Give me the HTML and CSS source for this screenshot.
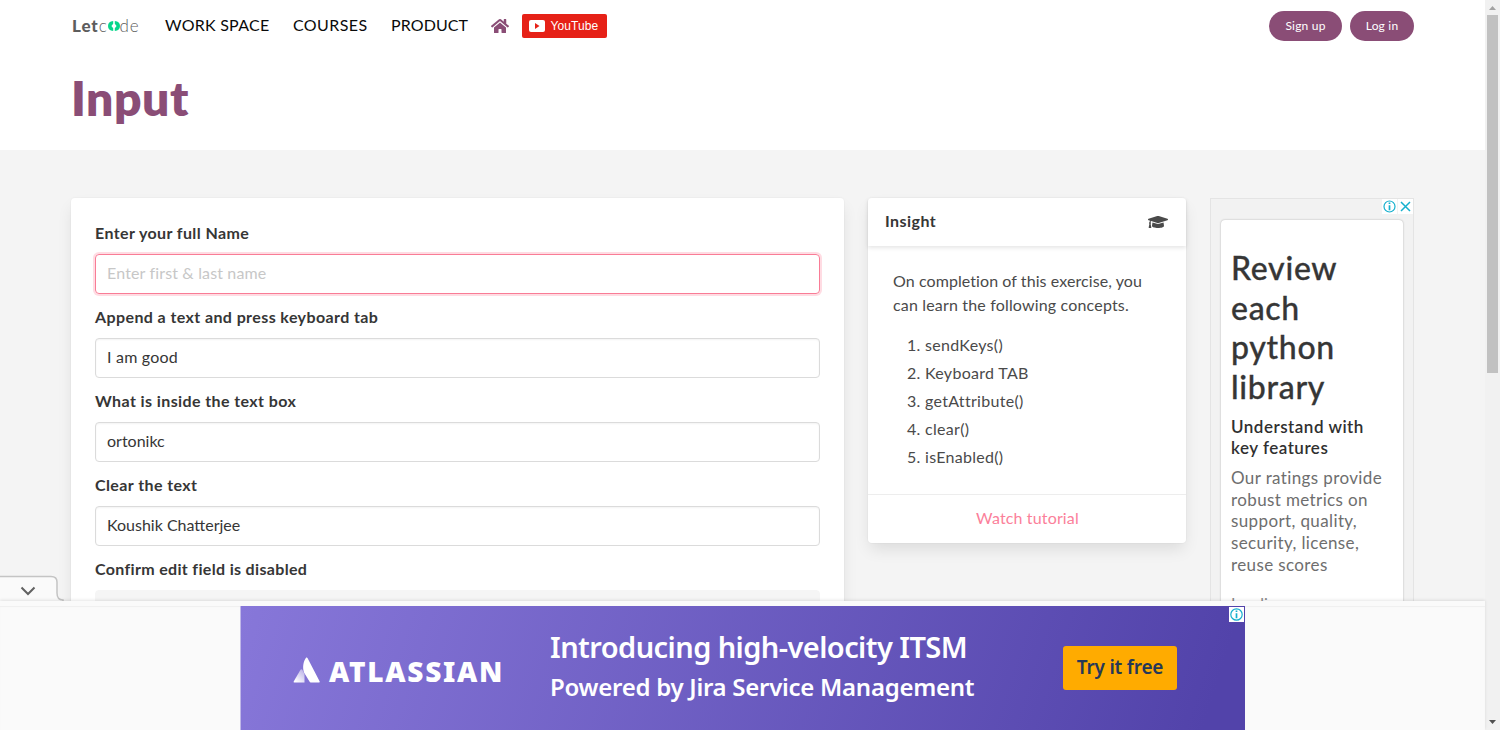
FILE: index.html
```html
<!DOCTYPE html>
<html lang="en">
<head>
<meta charset="utf-8">
<title>Input | LetCode</title>
<link rel="stylesheet" href="styles.css">
</head>
<body>
<div class="window">
  <div class="viewport">
    <div class="page">
      <header class="navbar">
        <a class="logo"><b>Let</b><span>c</span><svg width="12" height="10" viewBox="0 0 12 10"><path d="M5.200 0Q0 .500 0 5T5.200 10V7.200L3.400 5l1.800-2.200zM6.800 0Q12 .500 12 5T6.800 10V7.200L8.600 5 6.800 2.800z" fill="#08d68b"/></svg><span>de</span></a>
        <nav class="links">
          <a class="work">WORK SPACE</a>
          <a class="courses">COURSES</a>
          <a class="product">PRODUCT</a>
        </nav>
        <svg class="home" width="18" height="16" viewBox="0 0 576 512"><path fill="#8a4d76" d="M280.370 148.260 96 300.110V464a16 16 0 0 0 16 16l112-.300a16 16 0 0 0 16-16V368a16 16 0 0 1 16-16h64a16 16 0 0 1 16 16v95.600a16 16 0 0 0 16 16.100L464 480a16 16 0 0 0 16-16V300L295.670 148.260a12.190 12.190 0 0 0-15.300 0zM571.600 251.470 488 182.560V44a12 12 0 0 0-12-12h-56a12 12 0 0 0-12 12v72.600l-89.500-73.700a48 48 0 0 0-61 0L4.300 251.470a12 12 0 0 0-1.600 16.900l25.500 31a12 12 0 0 0 16.900 1.600l235.200-193.700a12.200 12.200 0 0 1 15.300 0L530.900 301a12 12 0 0 0 16.900-1.600l25.500-31a12 12 0 0 0-1.700-16.930z"/></svg>
        <a class="youtube"><svg width="16" height="12" viewBox="0 0 16 12"><rect width="16" height="12" rx="2" fill="#fff"/><path d="M6 3v6l4.500-3z" fill="#e62117"/></svg>YouTube</a>
        <div class="account"><a class="pill signup">Sign up</a><a class="pill login">Log in</a></div>
      </header>
      <h1 class="title">Input</h1>
      <main class="columns">
        <section class="card form">
          <label>Enter your full Name</label><div class="input focused"><span>Enter first &amp; last name</span></div>
          <label>Append a text and press keyboard tab</label><div class="input airy"><span>I am good</span></div>
          <label>What is inside the text box</label><div class="input"><span>ortonikc</span></div>
          <label>Clear the text</label><div class="input"><span>Koushik Chatterjee</span></div>
          <label class="last">Confirm edit field is disabled</label><div class="input disabled"></div>
        </section>
        <section class="card insight">
          <div class="card-header"><span>Insight</span>
            <svg width="20" height="16" viewBox="0 0 640 512"><path fill="#4a4a4a" d="M622.340 153.200 343.400 67.500c-15.200-4.670-31.600-4.670-46.790 0L17.660 153.200c-23.540 7.230-23.540 38.360 0 45.590l48.630 14.940c-10.670 13.190-17.230 29.280-17.880 46.900C38.780 266.150 32 276.110 32 288c0 10.780 5.680 19.850 13.860 25.650L20.330 428.530C18.110 438.520 25.710 448 35.940 448h56.110c10.240 0 17.840-9.480 15.620-19.470L82.140 313.650C90.320 307.850 96 298.780 96 288c0-11.570-6.470-21.250-15.660-26.870.76-15.020 8.440-28.300 20.690-36.720L296.600 284.500c9.060 2.780 26.440 6.250 46.790 0l278.950-85.700c23.550-7.240 23.550-38.360 0-45.600zM352.790 315.090c-28.530 8.760-52.840 3.920-65.590 0l-145.020-44.550L128 384c0 35.350 85.960 64 192 64s192-28.650 192-64l-14.180-113.470z"/></svg>
          </div>
          <div class="card-body">
            <p><span class="intro">On completion of this exercise, you</span><br><span>can learn the following concepts.</span></p>
            <ol><li>sendKeys()</li><li>Keyboard TAB</li><li>getAttribute()</li><li>clear()</li><li>isEnabled()</li></ol>
          </div>
          <a class="card-footer">Watch tutorial</a>
        </section>
        <aside class="side-ad">
          <div class="ad-choices">
            <svg width="15" height="15" viewBox="0 0 15 15" fill="none" stroke="#16b0ce"><circle cx="7.500" cy="7.500" r="5.500" stroke-width="1.200"/><path d="M7.500 3.500v1.500M7.500 6.200v5" stroke-width="1.700"/></svg>
            <svg width="15" height="15" viewBox="0 0 15 15"><path d="m3 3 9 9m0-9-9 9" stroke="#16b0ce" stroke-width="1.500"/></svg>
          </div>
          <div class="ad-card">
            <h2>Review<br>each<br>python<br>library</h2>
            <h3>Understand with<br>key features</h3>
            <p>Our ratings provide<br>robust metrics on<br>support, quality,<br>security, license,<br>reuse scores</p>
            <div class="more">Leading</div>
          </div>
        </aside>
      </main>
      <svg class="dock-tab" width="70" height="28" viewBox="0 0 70 28"><path d="M-1 3.500H51Q57 3.500 57 9V20Q57 27 63 27V29H-1Z" fill="#fafafa" stroke="#c4c4c4" stroke-width="1.500"/><path d="m21.500 14.500 6.500 6.500 6.500-6.500" fill="none" stroke="#616161" stroke-width="2"/></svg>
    </div>
    <footer class="dock">
      <div class="banner">
        <svg class="mark" width="28" height="26" viewBox="0 0 28 26"><defs><linearGradient id="fade" x1="1" y1="0" x2="0.300" y2="1"><stop offset="0" stop-color="#fff" stop-opacity=".4"/><stop offset="1" stop-color="#fff"/></linearGradient></defs><path d="M7.500 12.800Q8.500 11.500 9.500 13L11.500 17V25.500H1.200Q.300 25.500.700 24.500z" fill="url(#fade)"/><path d="M13.200.600Q14 .100 14.500 1l12.200 23.500Q27.100 25.500 26 25.500H17.800Q16.900 25.500 16.500 24.600L11 15.500C9.200 10 10.500 4 13.200.600z" fill="#fff"/></svg>
        <span class="brand">ATLASSIAN</span>
        <div class="pitch"><div class="pitch1">Introducing high-velocity ITSM</div><div class="pitch2">Powered by Jira Service Management</div></div>
        <a class="cta">Try it free</a>
        <svg class="banner-info" width="15" height="15" viewBox="0 0 15 15" fill="none" stroke="#16b0ce"><rect width="15" height="15" fill="#fff" stroke="none"/><circle cx="7.500" cy="7.500" r="5.700" stroke-width="1.200"/><path d="M7.500 3.500v1.500M7.500 6.200v5" stroke-width="1.700"/></svg>
      </div>
    </footer>
  </div>
  <div class="scrollbar">
    <svg width="15" height="15" viewBox="0 0 15 15"><path d="M4 10h7L7.500 6z" fill="#a3a3a3"/></svg>
    <div class="thumb"></div>
    <svg width="15" height="15" viewBox="0 0 15 15"><path d="M4 5h7L7.500 9z" fill="#505050"/></svg>
  </div>
</div>
</body>
</html>
```
FILE: styles.css
```css
* { box-sizing: border-box; }
body { margin: 0; font: 16px/24px Lato, sans-serif; color: #4a4a4a; }
h1, h2, h3, p, ol { margin: 0; }
svg { display: block; flex: none; }
span, label, a { white-space: nowrap; }
.window { display: flex; width: 1500px; height: 730px; overflow: hidden; }
.viewport { width: 1485px; display: flex; flex-direction: column; }
.page { position: relative; height: 601px; overflow: hidden; background: #f4f4f4; }
.navbar { height: 52px; background: #fff; padding: 0 71px 0 72px; display: flex; align-items: center; }
.logo { display: flex; align-items: center; width: 93px; color: #5d5d5d; font-size: 17px; letter-spacing: .9px; }
.logo b { font-weight: 900; }
.logo span { font-weight: 300; }
.links { display: flex; width: 326px; color: #0a0a0a; letter-spacing: .2px; padding-bottom: 2px; }
.work { width: 128px; letter-spacing: .25px; }
.courses { width: 98px; letter-spacing: .4px; }
.product { letter-spacing: .1px; }
.youtube { margin-left: 13px; width: 85px; height: 24px; padding-left: 7px; display: flex; align-items: center; gap: 5.500px; border-radius: 2px; background: #e62117; color: #fff; font: 12px "Liberation Sans", sans-serif; letter-spacing: .1px; }
.account { display: flex; gap: 8px; margin-left: auto; }
.pill { height: 30px; border-radius: 15px; background: #8a4d76; color: #fff; font-size: 12px; line-height: 29px; letter-spacing: .2px; text-align: center; }
.signup { width: 73px; }
.login { width: 64px; }
.title { height: 98px; background: #fff; padding: 18px 0 0 71px; font-size: 48px; line-height: 56px; font-weight: 800; letter-spacing: .5px; color: #8a4d76; }
.columns { display: flex; align-items: flex-start; gap: 24px; padding: 48px 71px 0; }
.card { background: #fff; border-radius: 4px; box-shadow: 0 8px 16px -2px rgba(10,10,10,.1), 0 0 0 1px rgba(10,10,10,.02); }
.form { width: 773px; height: 650px; padding: 23px 24px; }
.form label { display: block; margin-bottom: 9px; font-weight: 700; letter-spacing: .4px; color: #363636; }
.form .last { letter-spacing: .33px; }
.input { height: 40px; margin-bottom: 11px; padding: 6px 11px; border: 1px solid #dbdbdb; border-radius: 4px; color: #363636; box-shadow: inset 0 1px 2px rgba(10,10,10,.05); }
.airy { letter-spacing: .2px; }
.focused { letter-spacing: .15px; border-color: #f97c96; color: #c7c7c7; box-shadow: 0 0 0 2px rgba(255,115,144,.25); }
.disabled { background: #f5f5f5; border-color: #f5f5f5; box-shadow: none; }
.insight { width: 318px; }
.card-header { height: 48px; padding: 0 18px 0 17px; display: flex; align-items: center; justify-content: space-between; font-weight: 700; letter-spacing: .45px; color: #363636; box-shadow: 0 2px 4px rgba(10,10,10,.1); }
.card-header span { padding-bottom: 2px; }
.card-body { padding: 23px 24px; height: 248px; }
.card-body p { margin-left: 1px; letter-spacing: .17px; }
.card-body .intro { letter-spacing: .08px; }
.card-body ol { margin-top: 16px; padding-left: 33px; letter-spacing: .3px; }
.card-body li + li { margin-top: 4px; }
.card-footer { display: block; border-top: 1px solid #ededed; height: 49px; line-height: 46px; padding-left: 1px; letter-spacing: .15px; text-align: center; color: #fb809a; }
.side-ad { width: 204px; height: 600px; border: 1px solid #e4e4e4; background: #f2f2f2; padding: 0 10px 0 9.500px; }
.ad-choices { display: flex; gap: 1px; margin-right: -10px; justify-content: flex-end; }
.ad-choices svg { background: #fff; }
.ad-card { margin: 5.500px 0 0 auto; width: 182px; height: 560px; background: #fff; border-radius: 4px; box-shadow: 0 0 2px rgba(0,0,0,.3); padding: 28.500px 10px; }
.ad-card h2 { font-size: 32px; line-height: 39.700px; font-weight: 500; letter-spacing: .7px; color: #363636; -webkit-text-stroke: .3px #363636; }
.ad-card h3 { margin-top: 9px; font-size: 17px; line-height: 21.500px; font-weight: 600; letter-spacing: .5px; color: #303030; white-space: nowrap; }
.ad-card p { margin-top: 8px; font-size: 17px; line-height: 21.700px; letter-spacing: .38px; color: #6e6e6e; white-space: nowrap; }
.more { margin-top: 16px; color: #8a8a8a; }
.dock-tab { position: absolute; left: 0; bottom: 0; }
.dock { position: relative; height: 129px; background: #fafafa; padding: 5px 0 0 240px; box-shadow: 0 -1px 3px rgba(0,0,0,.1), inset 0 5px 0 #fafafa, inset 0 6px 1px #efefef; }
.banner { position: relative; width: 1005px; height: 124px; padding-left: 52px; display: flex; align-items: center; color: #fff; border-left: 1px solid #c0b8e8; background: linear-gradient(108deg, #8777d9, #5243aa 96%); font-family: "Noto Sans", sans-serif; }
.mark { margin-top: 3px; }
.brand { margin: 5px 0 0 8px; width: 221px; font-size: 28px; font-weight: 900; letter-spacing: 1.700px; }
.pitch { width: 513px; margin-top: -4px; white-space: nowrap; font-weight: 600; }
.pitch1 { font-size: 29px; line-height: 41px; letter-spacing: -.57px; }
.pitch2 { font-size: 24px; line-height: 39px; letter-spacing: -.27px; }
.cta { width: 114px; height: 44px; border-radius: 3px; background: #ffab00; color: #253858; font-size: 19px; font-weight: 600; letter-spacing: -.2px; line-height: 43px; text-align: center; }
.banner-info { position: absolute; right: 1px; top: 1px; }
.scrollbar { width: 15px; background: #f1f1f1; display: flex; flex-direction: column; }
.thumb { width: 11px; height: 358px; margin: 0 2px auto; background: #c1c1c1; }
```
